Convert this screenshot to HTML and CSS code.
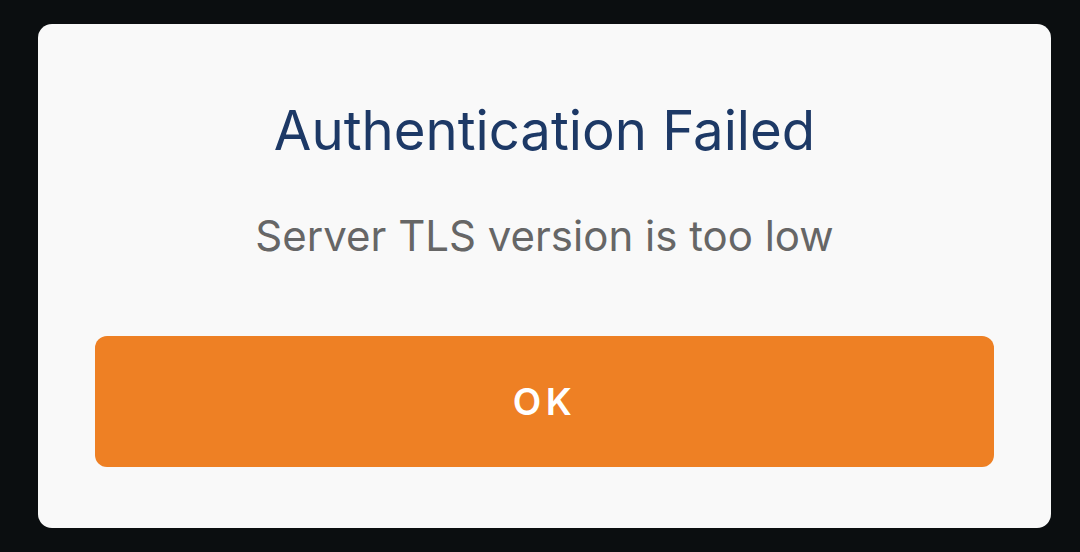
FILE: index.html
```html
<!DOCTYPE html>
<html>
<head>
<meta charset="utf-8">
<link rel="stylesheet" href="styles.css">
</head>
<body>
<div class="screen">
  <div class="dialog">
    <h1 class="title">Authentication Failed</h1>
    <p class="message">Server TLS version is too low</p>
    <button class="ok">OK</button>
  </div>
</div>
</body>
</html>
```
FILE: styles.css
```css
html, body {
  margin: 0;
  padding: 0;
  background: #0b0e10;
  width: 1080px;
  height: 552px;
  overflow: hidden;
}
.screen {
  padding: 24px 29px 24px 38px;
}
.dialog {
  width: 1013px;
  height: 504px;
  box-sizing: border-box;
  background: #f9f9f9;
  border-radius: 14px;
  padding: 74px 57px 61px;
  display: flex;
  flex-direction: column;
  align-items: stretch;
  font-family: Inter, "Noto Sans", sans-serif;
}
.title {
  margin: 0;
  font-size: 54.5px;
  line-height: 64px;
  font-weight: 400;
  color: #1d3966;
  text-align: center;
}
.message {
  margin: 49px 0 0;
  font-size: 42px;
  line-height: 50px;
  color: #666666;
  text-align: center;
}
.ok {
  margin-top: 75px;
  height: 131px;
  border: none;
  border-radius: 12px;
  background: #ee8024;
  color: #ffffff;
  font-family: Inter, "Noto Sans", sans-serif;
  font-size: 37px;
  font-weight: 600;
  letter-spacing: 4.5px;
  padding: 0;
}
```
